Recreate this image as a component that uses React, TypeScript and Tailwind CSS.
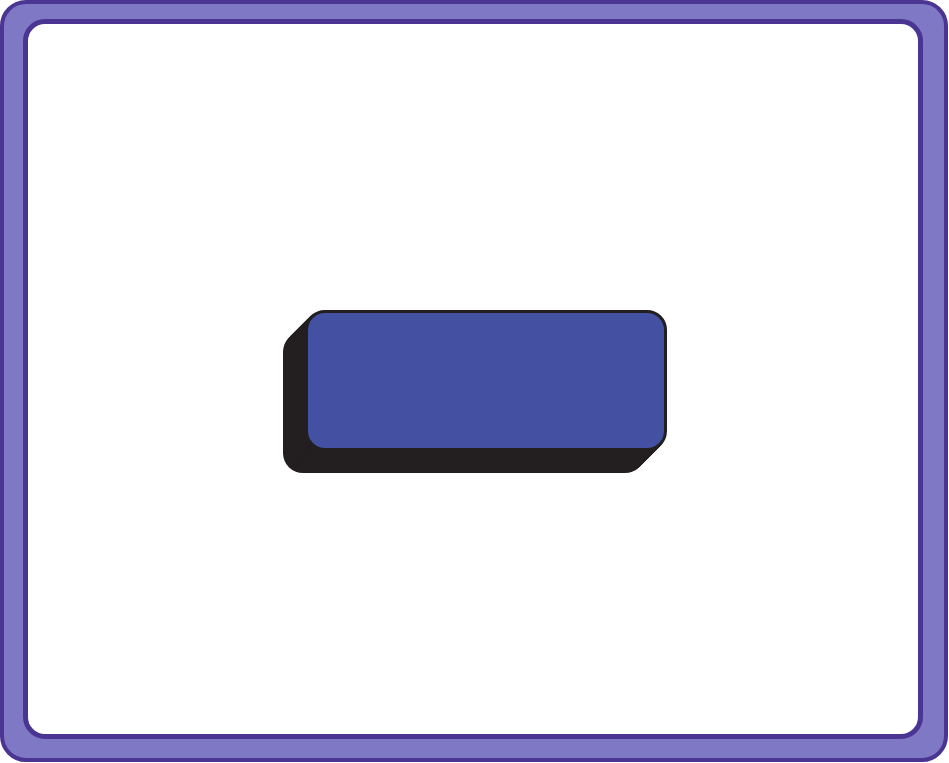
// framed card with a single extruded button in the middle
const App = () => {
	return (
		<div className="w-[949px] h-[763px] bg-white">
			{/* outer purple frame */}
			<div className="w-[948px] h-[762px] rounded-[26px] border-4 border-[#4a3592] bg-[#7f78c5] pl-[19px] pt-[15px] pr-[21px] pb-[19px]">
				{/* inner white panel */}
				<div className="flex items-center justify-center w-full h-full rounded-[22px] border-[5px] border-[#4a3592] bg-white">
					{/* button, extruded towards bottom-left */}
					<div className="pl-[22px] pb-[22px] ml-[4px] mt-[25px]">
						<button
							type="button"
							className="block w-[362px] h-[141px] rounded-[20px] border-[3px] border-[#231f20] bg-[#4451a2] shadow-[-1px_1px_0_#231f20,-2px_2px_0_#231f20,-3px_3px_0_#231f20,-4px_4px_0_#231f20,-5px_5px_0_#231f20,-6px_6px_0_#231f20,-7px_7px_0_#231f20,-8px_8px_0_#231f20,-9px_9px_0_#231f20,-10px_10px_0_#231f20,-11px_11px_0_#231f20,-12px_12px_0_#231f20,-13px_13px_0_#231f20,-14px_14px_0_#231f20,-15px_15px_0_#231f20,-16px_16px_0_#231f20,-17px_17px_0_#231f20,-18px_18px_0_#231f20,-19px_19px_0_#231f20,-20px_20px_0_#231f20,-21px_21px_0_#231f20,-22px_22px_0_#231f20]"
						></button>
					</div>
				</div>
			</div>
		</div>
	);
};

export default App;
